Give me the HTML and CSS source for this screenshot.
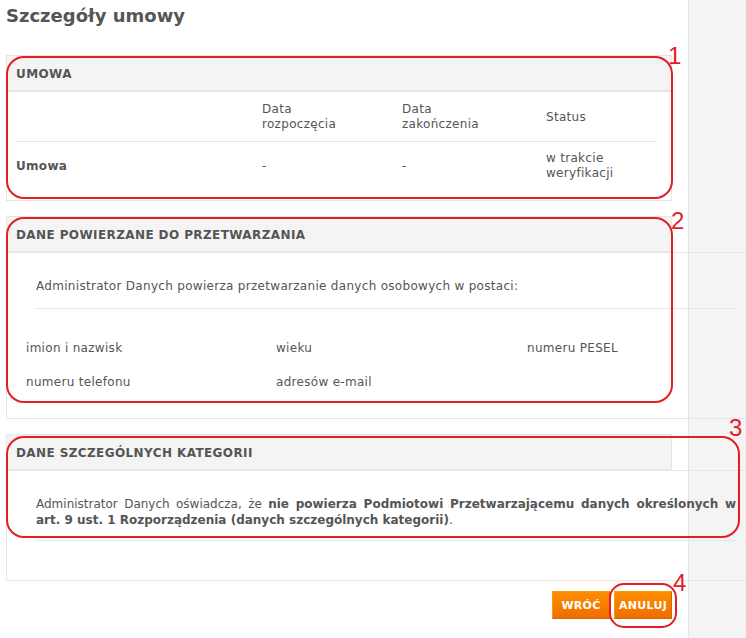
FILE: index.html
```html
<!DOCTYPE html>
<html lang="pl">
<head>
<meta charset="utf-8">
<title>Szczegóły umowy</title>
<link rel="stylesheet" href="styles.css">
</head>
<body>
<div class="page">
  <main class="main">
    <h1 class="title">Szczegóły umowy</h1>

    <section class="panel panel-first">
      <div class="panel-head">UMOWA</div>
      <div class="panel-body">
        <div class="contract">
          <div class="row row-head">
            <div></div>
            <div>Data<br>rozpoczęcia</div>
            <div>Data<br>zakończenia</div>
            <div>Status</div>
          </div>
          <div class="row">
            <div class="strong">Umowa</div>
            <div>-</div>
            <div>-</div>
            <div>w trakcie<br>weryfikacji</div>
          </div>
        </div>
      </div>
    </section>

    <section class="panel">
      <div class="panel-head">DANE POWIERZANE DO PRZETWARZANIA</div>
      <div class="panel-body panel-body-wide">
        <p class="intro">Administrator Danych powierza przetwarzanie danych osobowych w postaci:</p>
        <ul class="items">
          <li>imion i nazwisk</li>
          <li>wieku</li>
          <li>numeru PESEL</li>
          <li>numeru telefonu</li>
          <li>adresów e-mail</li>
        </ul>
      </div>
    </section>

    <section class="panel">
      <div class="panel-head">DANE SZCZEGÓLNYCH KATEGORII</div>
      <div class="panel-body panel-body-wide panel-body-tall">
        <p class="intro statement"><span class="line-one">Administrator Danych oświadcza, że <strong>nie powierza Podmiotowi Przetwarzającemu danych określonych w</strong></span><strong>art. 9 ust. 1 Rozporządzenia (danych szczególnych kategorii)</strong>.</p>
      </div>
    </section>

    <div class="actions">
      <button class="btn" type="button">WRÓĆ</button>
      <button class="btn" type="button">ANULUJ</button>
    </div>
  </main>

  <div class="mark mark-1"></div>
  <div class="mark mark-2"></div>
  <div class="mark mark-3"></div>
  <div class="mark mark-4"></div>
  <span class="mark-num num-1">1</span>
  <span class="mark-num num-2">2</span>
  <span class="mark-num num-3">3</span>
  <span class="mark-num num-4">4</span>
</div>
</body>
</html>
```

FILE: styles.css
```css
* { box-sizing: border-box; }
html, body { margin: 0; padding: 0; }
body {
  font-family: "DejaVu Sans", Verdana, sans-serif;
  font-size: 12px;
  letter-spacing: 0.3px;
  color: #555;
  background: #fff;
  overflow: hidden;
}
.page {
  position: relative;
  width: 746px;
  height: 638px;
  overflow: hidden;
  background: linear-gradient(to right, #fff 0, #fff 688px, #e4e4e4 688px, #e4e4e4 689px, #f4f4f4 689px, #f4f4f4 100%);
}
.main { width: 688px; }
.title {
  margin: 0;
  padding: 5px 6px 0;
  font-size: 18px;
  line-height: 22px;
  font-weight: bold;
  letter-spacing: 0;
  color: #555;
}
.panel { width: 666px; margin: 15px 0 0 6px; }
.panel-first { margin-top: 28px; }
.panel-head {
  height: 36px;
  border: 1px solid #e6e6e6;
  background: #f4f4f4;
  padding-left: 9px;
  font-size: 12px;
  font-weight: bold;
  letter-spacing: 0.4px;
  line-height: 37px;
  color: #555;
  white-space: nowrap;
}
.panel-body {
  border: 1px solid #e6e6e6;
  background: transparent;
  padding-bottom: 10px;
}
.panel-body-wide { width: 742px; padding-bottom: 0; }
.contract { margin: 0 14px 0 9px; }
.row {
  display: grid;
  grid-template-columns: 246px 140px 144px 1fr;
  align-items: center;
  padding: 9px 0;
  line-height: 15px;
}
.row-head { padding-top: 10px; border-bottom: 1px solid #e6e6e6; }
.strong { font-weight: bold; }
.intro {
  margin: 0 11px 0 29px;
  padding: 26px 0 14px;
  line-height: 15px;
  border-bottom: 1px solid #e6e6e6;
}
.items {
  list-style: none;
  margin: 0;
  padding: 32px 0 28px 19px;
  display: grid;
  grid-template-columns: 250px 251px 250px;
  row-gap: 19px;
  line-height: 15px;
}
.panel-body-tall { padding-bottom: 39px; }
.statement {
  padding: 25px 0 12px;
  line-height: 16px;
  letter-spacing: 0;
  text-align: justify;
}
.line-one { display: block; text-align: justify; text-align-last: justify; }
.actions {
  width: 666px;
  margin: 10px 0 0 6px;
  display: flex;
  justify-content: flex-end;
  gap: 4px;
}
.btn {
  width: 58px;
  height: 28px;
  padding: 0;
  border: 1px solid;
  border-color: #f5a200 #d96400 #d96400 #f5a200;
  background: linear-gradient(#ff8f00, #ef6c00);
  color: #fff;
  font-family: "DejaVu Sans", Verdana, sans-serif;
  font-size: 11px;
  font-weight: bold;
  letter-spacing: 0.3px;
  cursor: pointer;
}
.mark {
  position: absolute;
  border: 2px solid #e31e24;
  border-radius: 18px;
}
.mark-1 { left: 6px; top: 56px; width: 667px; height: 143px; }
.mark-2 { left: 6px; top: 217px; width: 667px; height: 186px; }
.mark-3 { left: 6px; top: 436px; width: 734px; height: 102px; }
.mark-4 { left: 609px; top: 583px; width: 68px; height: 45px; border-radius: 15px; }
.mark-num {
  position: absolute;
  font-family: "Liberation Sans", Arial, sans-serif;
  font-size: 24px;
  line-height: 24px;
  letter-spacing: 0;
  color: #e31e24;
}
.num-1 { left: 668px; top: 44px; }
.num-2 { left: 671px; top: 209px; }
.num-3 { left: 729px; top: 416px; }
.num-4 { left: 673px; top: 571px; }
```
